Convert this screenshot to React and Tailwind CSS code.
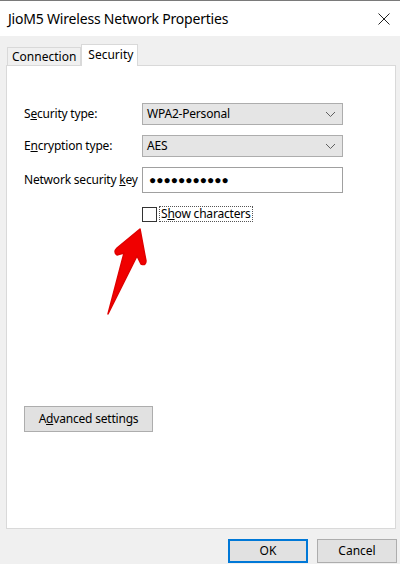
import React from 'react';

const Chevron = () => (
    <svg width="11" height="7" viewBox="0 0 11 7" className="shrink-0">
        <path d="M1 1l4.5 4.5L10 1" fill="none" stroke="#606060" strokeWidth="1" />
    </svg>
);

const Dropdown = ({ value }) => (
    <div className="w-[201px] h-[22px] bg-[#e5e5e5] border border-[#adadad] flex items-center justify-between pl-[4px] pr-[6px] text-[12px] text-black">
        <span>{value}</span>
        <Chevron />
    </div>
);

const App = () => {
    return (
        <div
            className="relative w-[400px] h-[564px] bg-[#f0f0f0] overflow-hidden border-t border-[#7a7a7a] text-black"
            style={{ fontFamily: '"Noto Sans", "Open Sans", sans-serif' }}
        >
            {/* title bar */}
            <div className="h-[35px] bg-white flex items-center justify-between pl-[8px] pr-[10px]">
                <span className="text-[14px] tracking-[-0.2px]">JioM5 Wireless Network Properties</span>
                <svg width="12" height="12" viewBox="0 0 12 12">
                    <path d="M0.5 0.5l11 11M11.5 0.5l-11 11" stroke="#222" strokeWidth="1" />
                </svg>
            </div>

            {/* tabs */}
            <div className="flex items-end pl-[7px] pt-[7px] h-[29px]">
                <div className="h-[18px] px-[4px] border border-b-0 border-[#d9d9d9] bg-[#f0f0f0] text-[12px] leading-[17px]">
                    Connection
                </div>
                <div className="h-[22px] w-[57px] px-[6px] border border-b-0 border-[#d9d9d9] bg-white text-[12px] leading-[19px] -mb-px relative z-10">
                    Security
                </div>
            </div>

            {/* tab panel */}
            <div className="ml-[6px] w-[390px] h-[464px] border border-[#d9d9d9] bg-white flex flex-col pl-[17px] pt-[37px] text-[12px] tracking-[-0.2px]">
                <div className="flex items-center">
                    <span className="w-[118px] whitespace-nowrap">S<u>e</u>curity type:</span>
                    <Dropdown value="WPA2-Personal" />
                </div>
                <div className="flex items-center mt-[10px]">
                    <span className="w-[118px] whitespace-nowrap">E<u>n</u>cryption type:</span>
                    <Dropdown value="AES" />
                </div>
                <div className="flex items-center mt-[10px]">
                    <span className="w-[118px] whitespace-nowrap">Network security <u>k</u>ey</span>
                    <div className="w-[201px] h-[26px] border border-[#a0a0a0] flex items-center pl-[6px] text-[12px] tracking-[0px]">
                        ●●●●●●●●●●●
                    </div>
                </div>
                <div className="flex items-center mt-[13px] ml-[118px]">
                    <div className="w-[15px] h-[15px] border border-[#333] bg-white" />
                    <span className="ml-[2px] px-[1px] border border-dotted border-[#555] leading-[14px] whitespace-nowrap">
                        S<u>h</u>ow characters
                    </span>
                </div>

                <div className="mt-[184px]">
                    <button className="w-[129px] h-[26px] bg-[#e1e1e1] border border-[#adadad] text-[12px]">
                        A<u>d</u>vanced settings
                    </button>
                </div>
            </div>

            {/* dialog buttons */}
            <div className="flex justify-end gap-[9px] pr-[3px] mt-[10px]">
                <button className="w-[80px] h-[24px] bg-[#e1e1e1] border-2 border-[#0078d7] text-[12px]">OK</button>
                <button className="w-[80px] h-[24px] bg-[#e1e1e1] border border-[#adadad] text-[12px]">Cancel</button>
            </div>

            {/* red annotation arrow */}
            <svg className="absolute left-0 top-0" width="400" height="564" viewBox="0 0 400 564">
                <path
                    d="M140 228 L146 260 Q146 265 141 263 L137 255 L108 313 L124 252 L117 254 Q113 251 117 247 Z"
                    fill="#f00000"
                    stroke="#e00000"
                    strokeLinejoin="round"
                    strokeWidth="1.5"
                />
            </svg>
        </div>
    );
};

export default App;
